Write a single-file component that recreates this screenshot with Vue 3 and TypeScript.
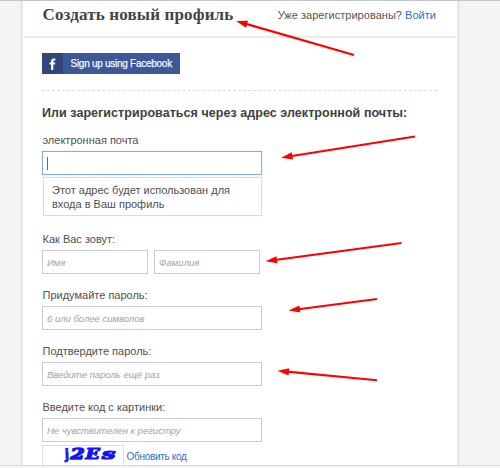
<script setup lang="ts">
interface Field {
  id: string
  label: string
  placeholders: string[]
}

interface Arrow {
  x1: number
  y1: number
  x2: number
  y2: number
}

const fields: Field[] = [
  { id: 'name', label: 'Как Вас зовут:', placeholders: ['Имя', 'Фамилия'] },
  { id: 'password', label: 'Придумайте пароль:', placeholders: ['6 или более символов'] },
  { id: 'confirm', label: 'Подтвердите пароль:', placeholders: ['Введите пароль ещё раз'] },
  { id: 'code', label: 'Введите код с картинки:', placeholders: ['Не чувствителен к регистру'] },
]

const arrows: Arrow[] = [
  { x1: 354, y1: 55, x2: 236, y2: 21 },
  { x1: 415, y1: 136.5, x2: 281, y2: 157.7 },
  { x1: 401.5, y1: 243, x2: 265.5, y2: 261.3 },
  { x1: 377, y1: 299, x2: 288.5, y2: 310.5 },
  { x1: 377, y1: 380.3, x2: 277.5, y2: 370.7 },
]

// Triangle whose tip lies on the end point of the arrow.
function head(a: Arrow): string {
  const len = Math.hypot(a.x2 - a.x1, a.y2 - a.y1)
  const ux = (a.x2 - a.x1) / len
  const uy = (a.y2 - a.y1) / len
  const bx = a.x2 - ux * 11.5
  const by = a.y2 - uy * 11.5
  return `${a.x2},${a.y2} ${bx - uy * 3.6},${by + ux * 3.6} ${bx + uy * 3.6},${by - ux * 3.6}`
}
</script>

<template>
  <div class="page">
    <main class="card">
      <header class="head">
        <h1>Создать новый профиль</h1>
        <p class="login">Уже зарегистрированы? <a>Войти</a></p>
      </header>

      <div class="body">
        <button class="facebook" type="button">
          <span class="fb-icon">
            <svg width="8" height="12" viewBox="0 0 8 12">
              <path d="M2.1 12V6.6H.5V4.4h1.6V3.1C2.1 1.2 3.2.4 4.8.4c.7 0 1.3.1 1.5.1v2H5.2c-.7 0-.9.4-.9 1v.9h2L6 6.6H4.3V12z" fill="#fff" />
            </svg>
          </span>
          <span class="fb-text">Sign up using Facebook</span>
        </button>

        <h2>Или зарегистрироваться через адрес электронной почты:</h2>

        <label class="label email-label">электронная почта</label>
        <div class="input focused"><i class="caret"></i></div>
        <div class="hint">Этот адрес будет использован для<br>входа в Ваш профиль</div>

        <section v-for="f in fields" :key="f.id" class="field">
          <label class="label">{{ f.label }}</label>
          <div class="row" :class="{ pair: f.placeholders.length > 1 }">
            <div v-for="p in f.placeholders" :key="p" class="input">{{ p }}</div>
          </div>
        </section>

        <div class="captcha-row">
          <div class="captcha">
            <svg width="80" height="22" viewBox="0 0 80 22">
              <g fill="#1414f5" stroke="#1414f5" stroke-linejoin="round" font-family="'DejaVu Serif', serif" font-weight="bold" font-style="italic">
                <text transform="translate(22 13) rotate(-3) scale(.9 1)" stroke-width=".7" font-size="14" font-family="'DejaVu Sans', sans-serif" font-style="normal">j</text>
                <text transform="translate(27.5 13) scale(1.45 1)" stroke-width="1.3" font-size="14">2</text>
                <text transform="translate(42.5 12.6) scale(1.35 1)" stroke-width="1.1" font-size="14">E</text>
                <text transform="translate(59 13.2) scale(1.65 1)" stroke-width="1.2" font-size="14.5">s</text>
              </g>
            </svg>
          </div>
          <a class="refresh">Обновить код</a>
        </div>
      </div>
    </main>
    <div class="bottom"></div>

    <svg class="arrows" width="500" height="468" viewBox="0 0 500 468">
      <g v-for="(a, i) in arrows" :key="i">
        <line :x1="a.x1" :y1="a.y1" :x2="a.x2 + (a.x1 - a.x2) * 0.07" :y2="a.y2 + (a.y1 - a.y2) * 0.07" stroke="#f00" stroke-width="2.1" />
        <polygon :points="head(a)" fill="#f00" />
      </g>
    </svg>
  </div>
</template>

<style>
body {
  margin: 0;
}
</style>

<style scoped>
.page {
  position: relative;
  box-sizing: border-box;
  display: flex;
  flex-direction: column;
  width: 500px;
  height: 468px;
  overflow: hidden;
  border-top: 1px solid #c4c4c4;
  background: #f4f4f4;
  color: #444;
  font-family: "Liberation Sans", Arial, sans-serif;
  font-size: 11px;
}
.card {
  width: 434px;
  height: 464px;
  margin-left: 20px;
  overflow: hidden;
  border: solid #e9e9e9;
  border-width: 0 3px;
  background: #fff;
}
.bottom {
  height: 2px;
  border-top: 1px solid #d9d9d9;
}
.head {
  display: flex;
  justify-content: space-between;
  box-sizing: border-box;
  height: 37px;
  padding: 0 21px 0 19.5px;
  border-bottom: 2px solid #ebebeb;
}
h1 {
  margin: 0;
  font: bold 17px/27px "Liberation Serif", "Times New Roman", serif;
  letter-spacing: 0.15px;
  color: #444;
  white-space: nowrap;
}
.login {
  margin: 0;
  line-height: 28px;
  letter-spacing: 0.03px;
  white-space: nowrap;
  color: #555;
}
a {
  color: #2b6fc9;
}
.body {
  display: flex;
  flex-direction: column;
  width: 395px;
  padding: 15px 0 0 19px;
}
.facebook {
  display: flex;
  width: 138px;
  height: 21px;
  margin: 0;
  padding: 0;
  border: 0;
  background: #3b5998;
  color: #f4f6fb;
  font: 10px/21px "Liberation Sans", Arial, sans-serif;
  letter-spacing: -0.27px;
  -webkit-text-stroke: 0.25px #f4f6fb;
  white-space: nowrap;
}
.fb-icon {
  display: flex;
  align-items: center;
  justify-content: center;
  width: 21px;
  height: 21px;
  background: #2f477a;
}
.fb-text {
  padding-left: 7.5px;
}
h2 {
  width: 395px;
  margin: 16px 0 0;
  padding-top: 14px;
  border-top: 1px dashed #dcdcdc;
  font-size: 12.5px;
  line-height: 16px;
  letter-spacing: 0.055px;
  color: #404040;
  white-space: nowrap;
}
.label {
  height: 14px;
  padding-left: 0.5px;
  line-height: 14px;
  white-space: nowrap;
  color: #505050;
}
.email-label {
  margin-top: 12px;
}
.input {
  box-sizing: border-box;
  width: 220px;
  height: 24px;
  padding: 0 4px;
  border: 1px solid #ccc;
  font-size: 9.5px;
  font-style: italic;
  line-height: 23px;
  white-space: nowrap;
  color: #a2a2a2;
}
.focused {
  display: flex;
  align-items: center;
  margin-top: 4px;
  border-color: #84aee0;
  box-shadow: 0 0 1px #a8caf0;
}
.caret {
  width: 1px;
  height: 13px;
  background: #666;
}
.hint {
  box-sizing: border-box;
  width: 219px;
  height: 39px;
  margin: 2px 0 0 1px;
  padding: 5px 8px;
  border: 1px solid #c6e0fb;
  box-shadow: 0 0 1px #cfe6fd;
  line-height: 14px;
  white-space: nowrap;
  color: #505050;
}
.field {
  display: flex;
  flex-direction: column;
  gap: 4px;
  height: 42px;
  margin-top: 14px;
}
.hint + .field {
  margin-top: 16px;
}
.row {
  display: flex;
  gap: 6px;
}
.pair .input {
  width: 106px;
}
.captcha-row {
  display: flex;
  gap: 2.5px;
  margin-top: 3px;
}
.captcha {
  width: 80px;
  height: 22px;
  border: 1px solid #ddd;
}
.refresh {
  font-size: 10px;
  line-height: 23px;
  letter-spacing: -0.3px;
}
.arrows {
  position: absolute;
  top: -1px;
  left: 0;
}
</style>
